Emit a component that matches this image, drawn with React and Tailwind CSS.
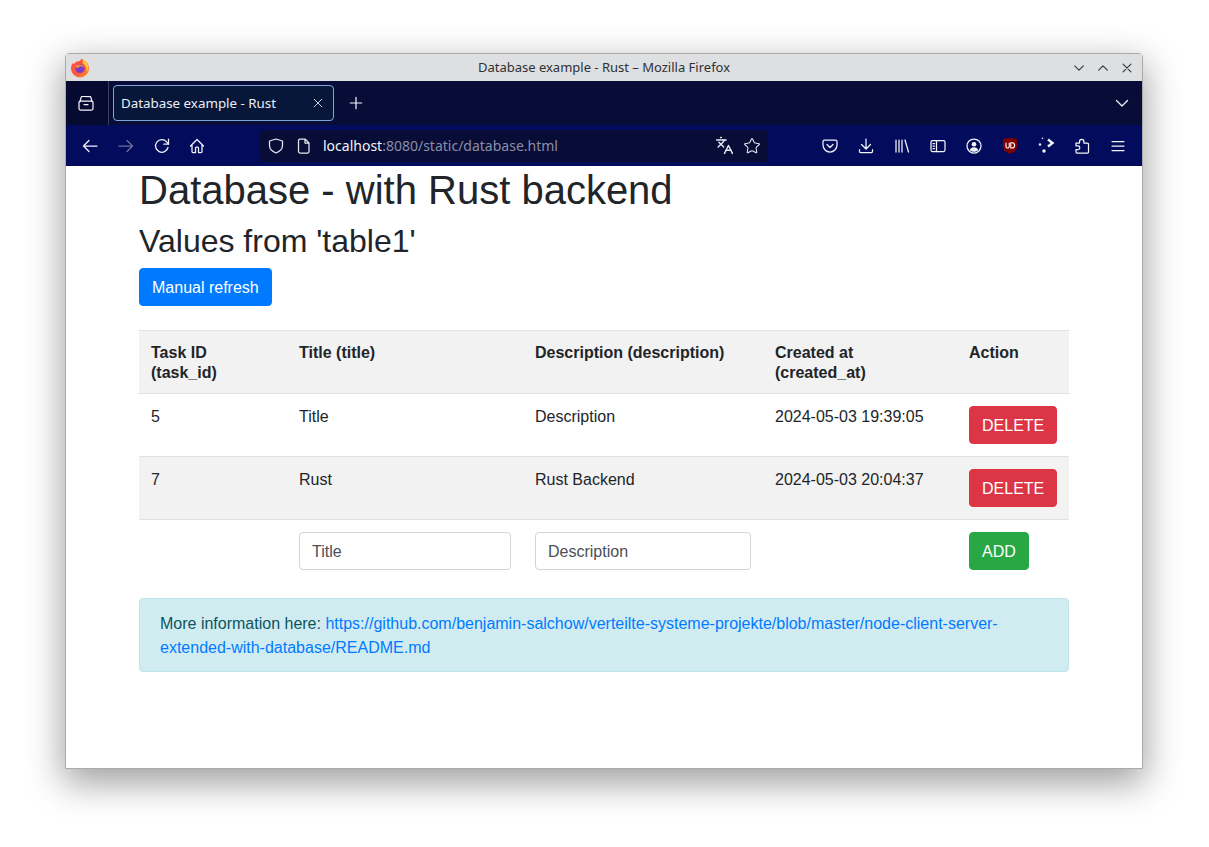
import React from 'react';
import { Languages, Star } from 'lucide-react';

const Ico = ({ children, size = 16, className = '', sw = 1.25 }) => (
  <svg width={size} height={size} viewBox="0 0 16 16" fill="none" stroke="currentColor" strokeWidth={sw} strokeLinecap="round" strokeLinejoin="round" className={className}>
    {children}
  </svg>
);

const FirefoxLogo = () => (
  <svg width="20" height="20" viewBox="0 0 20 20">
    <defs>
      <linearGradient id="ff" x1="0" y1="0" x2="1" y2="1">
        <stop offset="0" stopColor="#ff4a4a" />
        <stop offset="0.6" stopColor="#ff5a3c" />
        <stop offset="1" stopColor="#ff9a1f" />
      </linearGradient>
    </defs>
    <path d="M10 19.4a9 9 0 0 1-9-9c0-2 .7-4 1.8-5.4l1 1.3C5 4 7.6 3 9.5 3l2.5-2.6c.5 1.2 1.6 1.9 2.8 2.5 2.6 1.4 4.2 4.1 4.2 7.4a9 9 0 0 1-9 9.1z" fill="url(#ff)" />
    <path d="M13 1.5c2.5 1.2 5 3.6 5.4 7.2.2 2-.6 4-1.8 5.2 .4-3.4-.8-6.4-3.6-8.4-.6-1.2-.5-2.8 0-4z" fill="#ffc62b" />
    <circle cx="10" cy="10.4" r="4.6" fill="#7a3bc8" />
    <path d="M5 8.5c1.4-1.8 3.6-2.4 5.600-2 1.800.4 3.400 1.800 3.800 3.600-1.200-1.400-3-2-4.800-1.800l-.4 1.200c-1.600.4-3 .2-4.200-1z" fill="#ff8a2a" />
  </svg>
);

const NavIcon = ({ children }) => (
  <div className="w-9 h-full flex items-center justify-center shrink-0">{children}</div>
);

const UrlIcon = ({ children }) => (
  <div className="w-7 h-full flex items-center justify-center shrink-0 text-[#e6e8f2]">{children}</div>
);

const TitleBar = () => (
  <div className="h-[27px] bg-[#dedfe1] grid grid-cols-[1fr_auto_1fr] items-center shrink-0 text-[#2e3236]">
    <div className="pl-[4px] flex items-center"><FirefoxLogo /></div>
    <div className="text-[13px] font-['Noto_Sans',sans-serif]">Database example - Rust – Mozilla Firefox</div>
    <div className="flex items-center justify-end pr-[3px]">
      <div className="w-6 flex justify-center"><Ico size={14}><path d="M3 5.500l5 5 5-5" /></Ico></div>
      <div className="w-6 flex justify-center"><Ico size={14}><path d="M3 10.500l5-5 5 5" /></Ico></div>
      <div className="w-6 flex justify-center"><Ico size={14}><path d="M3.500 3.500l9 9M12.500 3.500l-9 9" /></Ico></div>
    </div>
  </div>
);

const TabBar = () => (
  <div className="h-[44px] bg-[#080d38] flex items-center shrink-0 text-[#f3f4f8]">
    <div className="w-[43px] h-full bg-[#060a30] border-r border-[#3a3e60] flex items-center justify-center pr-[2px]">
      <Ico size={16}>
        <path d="M2 6.500L3 2.800A1.500 1.500 0 0 1 4.500 1.500h7A1.500 1.500 0 0 1 13 2.800L14 6.500" />
        <rect x="1" y="6" width="14" height="9" rx="1.500" />
        <path d="M6 9.500h4" />
      </Ico>
    </div>
    <div className="ml-[4px] w-[221px] h-[36px] rounded-[4px] border border-[#7fa6dc] bg-[#06173a] flex items-center pl-[7px] pr-[9px] justify-between">
      <span className="text-[13.35px] font-['Noto_Sans',sans-serif] text-[#eceef4]">Database example - Rust</span>
      <Ico size={12} sw={1.1}><path d="M3 3l10 10M13 3L3 13" /></Ico>
    </div>
    <div className="w-[43px] flex justify-center"><Ico size={14} sw={1.4}><path d="M8 1.500v13M1.500 8h13" /></Ico></div>
    <div className="flex-1" />
    <div className="w-10 flex justify-center"><Ico size={16}><path d="M2.500 5.500L8 11l5.500-5.500" /></Ico></div>
  </div>
);

const NavBar = () => (
  <div className="h-[41px] bg-[#030c5c] flex items-center shrink-0 pl-[6px] pr-[6px] text-[#f3f4f8]">
    <NavIcon><Ico><path d="M15 8H1.500M7 2.500L1.500 8 7 13.500" /></Ico></NavIcon>
    <NavIcon><Ico className="text-[#6d719f]"><path d="M1 8h13.500M9 2.500L14.500 8 9 13.500" /></Ico></NavIcon>
    <NavIcon><Ico><path d="M14 9.500A6.300 6.300 0 1 1 12.600 3.800L14.500 6" /><path d="M14.500 1.200V6.200H9.800" /></Ico></NavIcon>
    <NavIcon>
      <Ico className="-ml-[2px]"><path d="M1.500 8L8 1.500 14.500 8M3 7v6.500a1 1 0 0 0 1 1h2.500V10a1 1 0 0 1 1-1h1a1 1 0 0 1 1 1v4.500H12a1 1 0 0 0 1-1V7" /></Ico>
    </NavIcon>
    <div className="w-[44px] shrink-0" />
    <div className="w-[508px] h-[32px] rounded-[4px] bg-[#080d38] flex items-center px-[2px] shrink-0">
      <UrlIcon><Ico size={16}><path d="M8 1L14.500 3v4.500c0 3.400-2.700 6-6.500 7.500-3.800-1.500-6.500-4.100-6.500-7.500V3z" /></Ico></UrlIcon>
      <UrlIcon><Ico size={16}><path d="M4 1h5l4 4v8.500a1.500 1.500 0 0 1-1.500 1.500h-7.500A1.500 1.500 0 0 1 2.500 13.500v-11A1.500 1.500 0 0 1 4 1zM9 1v4h4" /></Ico></UrlIcon>
      <div className="ml-[5px] flex-1 text-[14px] font-['Noto_Sans',sans-serif] whitespace-nowrap">
        <span className="text-[#f3f4f8]">localhost</span>
        <span className="text-[#8b8da6]">:8080/static/database.html</span>
      </div>
      <UrlIcon><Languages size={19} strokeWidth={1.8} /></UrlIcon>
      <UrlIcon><Star size={18} strokeWidth={1.4} /></UrlIcon>
    </div>
    <div className="flex-1" />
    <NavIcon><Ico><path d="M2.500 2h11A1.500 1.500 0 0 1 15 3.500V7c0 4-3.200 7-7 7S1 11 1 7V3.500A1.500 1.500 0 0 1 2.500 2z" /><path d="M5 6.500L8 9.500l3-3" /></Ico></NavIcon>
    <NavIcon><Ico><path d="M8 1v9.500M3.500 6.500L8 11l4.500-4.500M1.500 11.500V13.500a1 1 0 0 0 1 1h11a1 1 0 0 0 1-1V11.500" /></Ico></NavIcon>
    <NavIcon><Ico><path d="M2 2v12M5 2v12M8 2v12M11 2l3.500 12" /></Ico></NavIcon>
    <NavIcon><Ico><rect x="1" y="2.500" width="14" height="11" rx="1.500" /><path d="M6.500 2.500v11M3 5.500h1.500M3 8h1.500M3 10.500h1.500" /></Ico></NavIcon>
    <NavIcon>
      <Ico>
        <circle cx="8" cy="8" r="7" />
        <circle cx="8" cy="6.300" r="2.300" fill="currentColor" stroke="none" />
        <path d="M3.800 12c.6-1.800 2.200-2.800 4.200-2.800s3.600 1 4.200 2.800c-1 1.100-2.500 1.800-4.200 1.800s-3.200-.7-4.200-1.800z" fill="currentColor" stroke="none" />
      </Ico>
    </NavIcon>
    <NavIcon>
      <svg width="16" height="17" viewBox="0 0 16 17">
        <path d="M1 2.300Q8 -.5 15 2.300V10c0 3-3.200 5.200-7 6.800C4.200 15.200 1 13 1 10z" fill="#800000" />
        <path d="M4 5.800v3.600a1.600 1.600 0 0 0 3.200 0V5.800M8.800 5.800v5.200h1.200a2.600 2.600 0 0 0 0-5.200z" fill="none" stroke="#fff" strokeWidth="1.100" />
      </svg>
    </NavIcon>
    <NavIcon>
      <svg width="18" height="18" viewBox="0 0 18 18" fill="currentColor">
        <circle cx="5.500" cy="1.200" r=".8" />
        <circle cx="3" cy="7.500" r="1.200" />
        <circle cx="7" cy="14" r="1.700" />
        <path d="M11 2.500L15.500 6 11 9.500" fill="none" stroke="currentColor" strokeWidth="2.400" />
      </svg>
    </NavIcon>
    <NavIcon>
      <Ico>
        <path d="M2 5h3.500V3.500a2.200 2.200 0 0 1 4.400 0V5h3.600a1 1 0 0 1 1 1v8a1 1 0 0 1-1 1H3a1 1 0 0 1-1-1v-2.500h2a1.800 1.800 0 0 0 0-3.600H2z" />
      </Ico>
    </NavIcon>
    <NavIcon><Ico><path d="M2 3.500h12M2 8h12M2 12.500h12" /></Ico></NavIcon>
  </div>
);

const Btn = ({ color, children }) => (
  <button className={`px-3 pt-[7px] pb-[5px] border rounded text-white text-base leading-6 ${color}`}>{children}</button>
);

const rows = [
  { id: 5, title: 'Title', description: 'Description', created: '2024-05-03 19:39:05' },
  { id: 7, title: 'Rust', description: 'Rust Backend', created: '2024-05-03 20:04:37' },
];

const Field = ({ placeholder, className }) => (
  <input
    placeholder={placeholder}
    className={`h-[38px] px-3 pt-[2px] border border-[#ced4da] rounded bg-white text-base placeholder:text-[#495057] placeholder:opacity-100 ${className}`}
  />
);

const Page = () => (
  <div className="flex-1 bg-white font-['Liberation_Sans',sans-serif] text-[#212529] text-base">
    <div className="w-[930px] mx-auto">
      <h1 className="text-[40px] leading-[48px] mb-2">Database - with Rust backend</h1>
      <h2 className="text-[32px] leading-[38.4px] mb-2">Values from 'table1'</h2>
      <Btn color="bg-[#007bff] border-[#007bff]">Manual refresh</Btn>

      <table className="w-[930px] table-fixed border-collapse mt-6 leading-[1.2]">
        <colgroup>
          <col className="w-[148px]" />
          <col className="w-[236px]" />
          <col className="w-[240px]" />
          <col className="w-[194px]" />
          <col className="w-[112px]" />
        </colgroup>
        <thead>
          <tr className="bg-[#f2f2f2] border-t border-[#dee2e6]">
            <th className="px-3 pt-3 pb-[11px] text-left align-top font-bold">Task ID<br />(task_id)</th>
            <th className="px-3 pt-3 pb-[11px] text-left align-top font-bold">Title (title)</th>
            <th className="px-3 pt-3 pb-[11px] text-left align-top font-bold">Description (description)</th>
            <th className="px-3 pt-3 pb-[11px] text-left align-top font-bold">Created at<br />(created_at)</th>
            <th className="px-3 pt-3 pb-[11px] text-left align-top font-bold">Action</th>
          </tr>
        </thead>
        <tbody>
          {rows.map((r, i) => (
            <tr key={r.id} className={`border-t border-[#dee2e6] ${i === 1 ? 'bg-[#f2f2f2]' : ''}`}>
              <td className="px-3 pt-[13px] pb-[11px] align-top">{r.id}</td>
              <td className="px-3 pt-[13px] pb-[11px] align-top">{r.title}</td>
              <td className="px-3 pt-[13px] pb-[11px] align-top">{r.description}</td>
              <td className="px-3 pt-[13px] pb-[11px] align-top">{r.created}</td>
              <td className="p-3 align-top"><Btn color="bg-[#dc3545] border-[#dc3545] block">DELETE</Btn></td>
            </tr>
          ))}
          <tr className="border-t border-[#dee2e6]">
            <td className="p-3" />
            <td className="p-3"><Field placeholder="Title" className="w-[212px] block" /></td>
            <td className="p-3"><Field placeholder="Description" className="w-[216px] block" /></td>
            <td className="p-3" />
            <td className="p-3"><Btn color="bg-[#28a745] border-[#28a745] block">ADD</Btn></td>
          </tr>
        </tbody>
      </table>

      <div className="mt-4 px-5 pt-[13px] pb-[11px] bg-[#d1ecf1] border border-[#bee5eb] rounded text-[#0c5460] leading-6">
        More information here: <a className="text-[#007bff]" href="#readme">https://github.com/benjamin-salchow/verteilte-systeme-projekte/blob/master/node-client-server-extended-with-database/README.md</a>
      </div>
    </div>
  </div>
);

export default function App() {
  return (
    <div className="w-[1209px] h-[847px] bg-white overflow-hidden pt-[53px] pl-[65px]">
      <div className="w-[1078px] h-[716px] flex flex-col border border-[#a9aaac] rounded-t-[4px] shadow-[0_12px_36px_2px_rgba(0,0,0,0.38)] bg-white">
        <TitleBar />
        <TabBar />
        <NavBar />
        <Page />
      </div>
    </div>
  );
}
